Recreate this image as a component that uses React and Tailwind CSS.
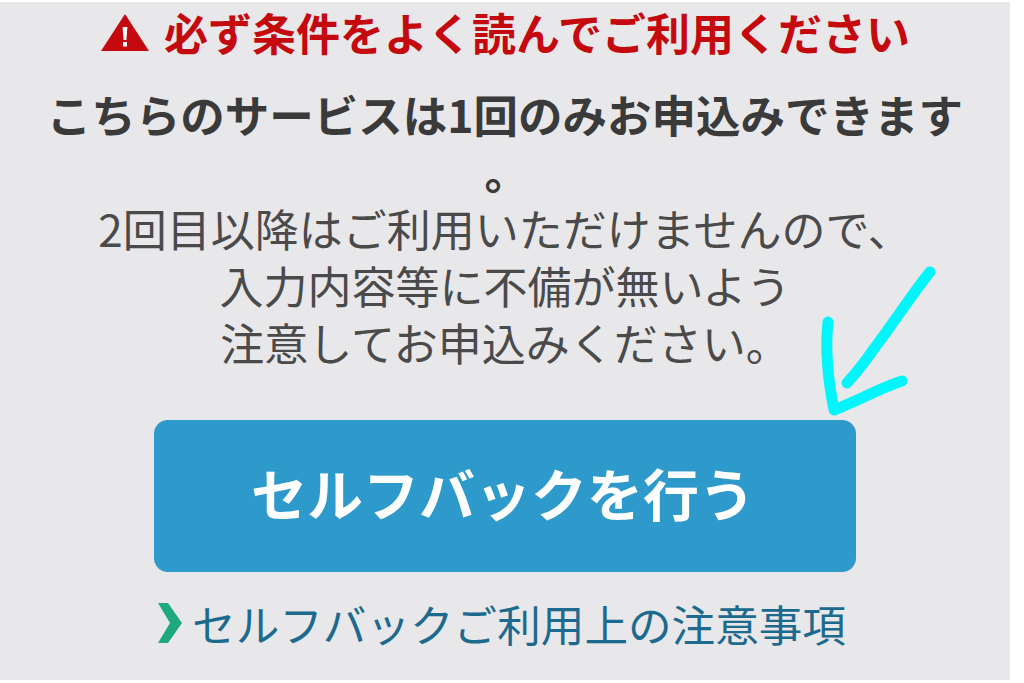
export default function App() {
  return (
    <div className="relative w-[1024px] h-[683px] overflow-hidden bg-white font-['Noto_Sans_CJK_JP',sans-serif]">
      <div className="mt-[2px] w-[1010px] h-[678px] bg-[#e8e7e9] flex flex-col items-center">
        <div className="h-[60px] flex items-center justify-center gap-[14px] w-full">
          <svg width="50" height="38" viewBox="0 0 50 38" className="shrink-0">
            <path d="M25 1 L49 38 L1 38 Z" fill="#c4090f" />
            <path d="M22.6 14 H27.4 L26.4 27 H23.6 Z" fill="#fff" />
            <rect x="23" y="29" width="4" height="4.5" fill="#fff" />
          </svg>
          <span className="text-[44px] leading-[60px] font-bold text-[#c4090f]">必ず条件をよく読んでご利用ください</span>
        </div>
        <div className="w-full text-center text-[44.5px] font-bold text-[#3a3a3a] leading-[60px] mt-[22px]">こちらのサービスは1回のみお申込みできます</div>
        <div className="w-full text-center text-[44px] font-bold text-[#3a3a3a] leading-[47px] mt-[4px] pl-[3px]">。</div>
        <div className="w-full text-center text-[44px] text-[#4a4a4a] leading-[57px] mt-[5px] flex flex-col items-center">
          <span>2回目以降はご利用いただけませんので、</span>
          <span>入力内容等に不備が無いよう</span>
          <span>注意してお申込みください。</span>
        </div>
        <button className="mt-[49px] w-[702px] h-[152px] rounded-[14px] bg-[#2e99cb] text-white text-[56px] font-bold flex items-center justify-center pb-[8px] pr-[4px]">セルフバックを行う</button>
        <div className="mt-[18px] flex items-center gap-[10px] text-[43.6px] leading-[66px] text-[#1d6a8f] mr-[6px]">
          <svg width="24" height="40" viewBox="0 0 24 40" className="shrink-0"><path d="M0 0 H10 L24 20 L10 40 H0 L12 20 Z" fill="#1ea97c" /></svg>
          <span>セルフバックご利用上の注意事項</span>
        </div>
      </div>
      <svg className="absolute left-[815px] top-[260px]" width="130" height="165" viewBox="0 0 130 165" fill="none">
        <path d="M115 12 C100 30 75 68 58 90 C50 102 42 112 32 123" stroke="#00f6fb" strokeWidth="11" strokeLinecap="round" strokeLinejoin="round" />
        <path d="M13 62 C10 90 14 125 19 150 C45 140 65 128 87 121" stroke="#00f6fb" strokeWidth="11" strokeLinecap="round" strokeLinejoin="round" />
      </svg>
    </div>
  );
}
